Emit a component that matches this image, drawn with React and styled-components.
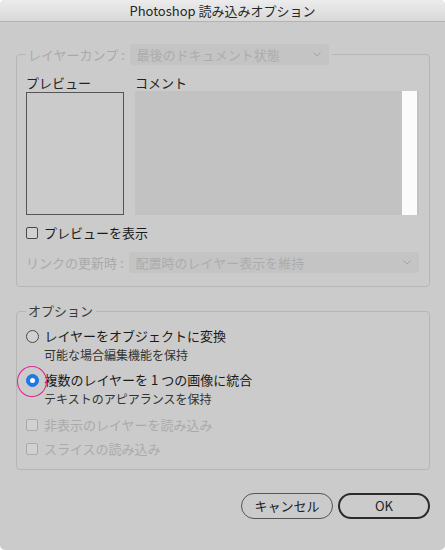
import React from "react";
import styled, { createGlobalStyle } from "styled-components";

const GlobalStyle = createGlobalStyle`
  html, body {
    margin: 0;
    padding: 0;
    background: #ffffff;
  }
  body {
    font-family: "Noto Sans CJK JP", "Noto Sans", sans-serif;
    font-size: 13px;
    color: #1e1e1e;
  }
`;

const Window = styled.div`
  width: 445px;
  height: 550px;
  background: #cbcbcb;
  border-radius: 5px;
  overflow: hidden;
  display: flex;
  flex-direction: column;
`;

const TitleBar = styled.div`
  height: 21px;
  border-bottom: 1px solid #b3b3b3;
  background: linear-gradient(#ececec, #d8d8d8);
  display: flex;
  align-items: center;
  justify-content: center;
  font-size: 13px;
  line-height: 21px;
  color: #262626;
`;

const Body = styled.div`
  padding: 0 15px 0 16px;
  display: flex;
  flex-direction: column;
`;

const Group = styled.fieldset`
  margin: ${(p) => p.$top}px 0 0 0;
  padding: ${(p) => p.$padTop}px 10px ${(p) => p.$padBottom}px 9px;
  border: 1px solid #b6b6b6;
  border-radius: 4px;
  min-inline-size: 0;
  display: flex;
  flex-direction: column;
`;

const Legend = styled.legend`
  padding: 0 3px 0 2px;
  display: flex;
  align-items: center;
  gap: 5px;
  line-height: 16px;
  white-space: nowrap;
  color: ${(p) => (p.$disabled ? "#a9a9a9" : "#3a3a3a")};
`;

const Select = styled.div`
  width: ${(p) => (p.$width ? `${p.$width}px` : "auto")};
  flex: ${(p) => (p.$width ? "none" : "1")};
  height: 21px;
  box-sizing: border-box;
  background: #c4c4c4;
  border-radius: 3px;
  padding: 0 8px 0 7px;
  display: flex;
  align-items: center;
  justify-content: space-between;
  color: #acacac;
  line-height: 21px;
  white-space: nowrap;
`;

const Chevron = () => (
  <svg width="8" height="5" viewBox="0 0 8 5">
    <polyline points="0.5,0.5 4,4 7.5,0.5" fill="none" stroke="#a2a2a2" strokeWidth="1" />
  </svg>
);

const PreviewRow = styled.div`
  display: flex;
  gap: 11px;
`;

const Column = styled.div`
  display: flex;
  flex-direction: column;
  width: ${(p) => p.$width}px;
`;

const Label = styled.div`
  line-height: 16px;
  margin-bottom: ${(p) => p.$gap}px;
  color: #222;
`;

const PreviewBox = styled.div`
  width: 98px;
  height: 123px;
  box-sizing: border-box;
  border: 1px solid #555;
`;

const CommentBox = styled.div`
  height: 124px;
  background: #c2c2c2;
  display: flex;
  justify-content: flex-end;
  padding: 0 2px 0 0;
`;

const Scroll = styled.div`
  width: 15px;
  background: #fbfbfb;
`;

const Row = styled.div`
  display: flex;
  align-items: center;
  gap: 6px;
  line-height: 18px;
  margin-top: ${(p) => p.$mt || 0}px;
  color: ${(p) => (p.$disabled ? "#aaaaaa" : "#1a1a1a")};
  position: relative;
  white-space: nowrap;
`;

const Check = styled.span`
  width: 12px;
  height: 12px;
  box-sizing: border-box;
  border: 1px solid ${(p) => (p.$disabled ? "#a9a9a9" : "#4a4a4a")};
  border-radius: 2px;
  background: rgba(255, 255, 255, 0.12);
  flex: none;
`;

const Radio = styled.span`
  width: 13px;
  height: 13px;
  box-sizing: border-box;
  border-radius: 50%;
  flex: none;
  border: 1px solid ${(p) => (p.$on ? "#1c76e2" : "#4a4a4a")};
  background: ${(p) => (p.$on ? "#1f7ae8" : "rgba(255,255,255,0.12)")};
  display: flex;
  align-items: center;
  justify-content: center;
  margin-left: -0.5px;

  &::after {
    content: "";
    display: ${(p) => (p.$on ? "block" : "none")};
    width: 5px;
    height: 5px;
    border-radius: 50%;
    background: #fff;
  }
`;

const Ring = styled.span`
  position: absolute;
  left: -9px;
  top: -5px;
  width: 28px;
  height: 29px;
  border: 1px solid #e0258c;
  border-radius: 50%;
  pointer-events: none;
`;

const Hint = styled.div`
  padding-left: 18px;
  line-height: 18px;
  font-size: 12px;
  color: #333;
  margin-top: 1px;
`;

const LinkRow = styled.div`
  display: flex;
  align-items: center;
  gap: 5px;
  margin-top: 10px;
  color: #a9a9a9;
  white-space: nowrap;
`;

const Footer = styled.div`
  display: flex;
  justify-content: flex-end;
  gap: 5px;
  margin-top: 23px;
`;

const Button = styled.button`
  width: ${(p) => p.$width}px;
  height: 26px;
  box-sizing: border-box;
  border-radius: 13px;
  border: ${(p) => (p.$primary ? "2px solid #2b2b2b" : "1px solid #555")};
  background: transparent;
  font-family: inherit;
  font-size: 13px;
  color: #222;
  padding: 0;
  line-height: 22px;
`;

export default function App() {
  return (
    <>
      <GlobalStyle />
      <Window>
        <TitleBar>Photoshop 読み込みオプション</TitleBar>
        <Body>
          <Group $top={22} $padTop={10} $padBottom={13}>
            <Legend $disabled>
              <span>レイヤーカンプ :</span>
              <Select $width={199}>
                <span>最後のドキュメント状態</span>
                <Chevron />
              </Select>
            </Legend>
            <PreviewRow>
              <Column $width={98}>
                <Label $gap={1}>プレビュー</Label>
                <PreviewBox />
              </Column>
              <Column $width={284}>
                <Label $gap={0}>コメント</Label>
                <CommentBox>
                  <Scroll />
                </CommentBox>
              </Column>
            </PreviewRow>
            <Row $mt={9}>
              <Check />
              <span>プレビューを表示</span>
            </Row>
            <LinkRow>
              <span>リンクの更新時 :</span>
              <Select>
                <span>配置時のレイヤー表示を維持</span>
                <Chevron />
              </Select>
            </LinkRow>
          </Group>

          <Group $top={16} $padTop={8} $padBottom={11}>
            <Legend>オプション</Legend>
            <Row>
              <Radio />
              <span>レイヤーをオブジェクトに変換</span>
            </Row>
            <Hint>可能な場合編集機能を保持</Hint>
            <Row $mt={7}>
              <Radio $on />
              <Ring />
              <span>複数のレイヤーを 1 つの画像に統合</span>
            </Row>
            <Hint>テキストのアピアランスを保持</Hint>
            <Row $mt={8} $disabled>
              <Check $disabled />
              <span>非表示のレイヤーを読み込み</span>
            </Row>
            <Row $mt={6} $disabled>
              <Check $disabled />
              <span>スライスの読み込み</span>
            </Row>
          </Group>

          <Footer>
            <Button $width={92}>キャンセル</Button>
            <Button $width={92} $primary>OK</Button>
          </Footer>
        </Body>
      </Window>
    </>
  );
}
